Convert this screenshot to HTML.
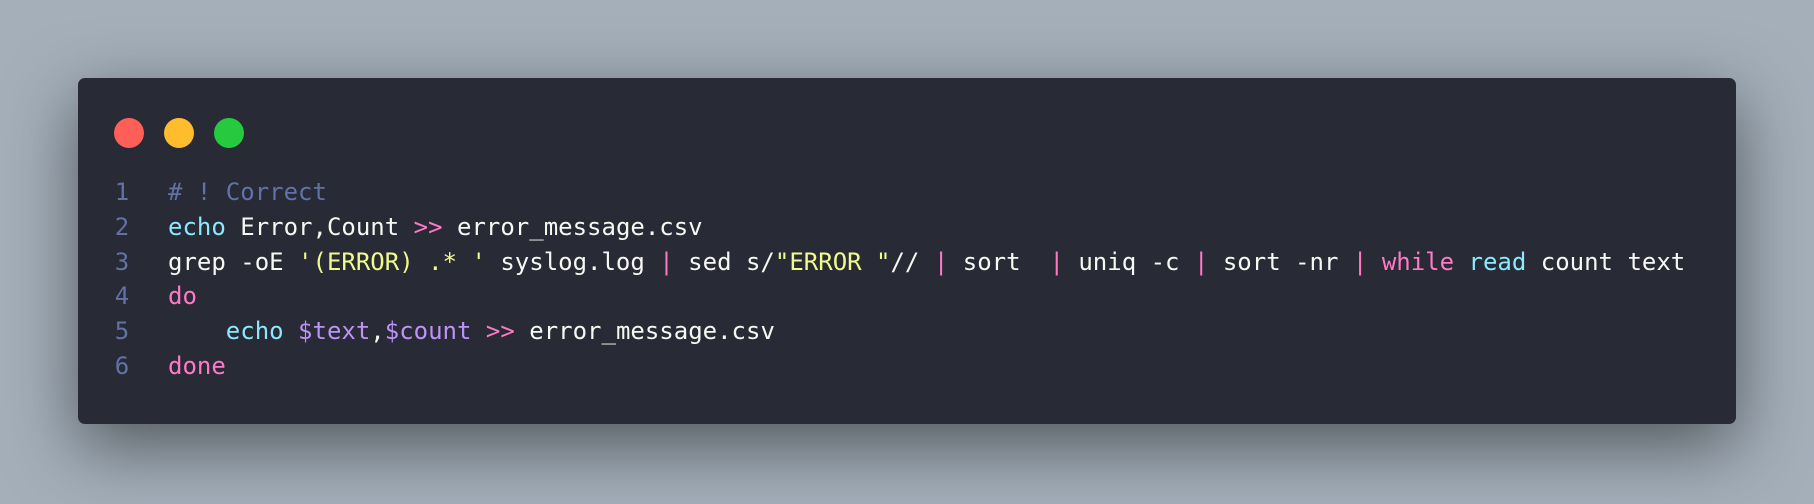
<!DOCTYPE html>
<html><head><meta charset="utf-8"><style>
html,body{margin:0;padding:0}
body{width:1814px;height:504px;background:#a4afba;position:relative;overflow:hidden}
.win{position:absolute;left:78px;top:78px;width:1658px;height:346px;background:#282a36;border-radius:7px;box-shadow:0 22px 70px rgba(0,0,0,0.5)}
.dot{position:absolute;top:40px;width:30px;height:30px;border-radius:50%}
.code{position:absolute;left:0;top:97px;width:1658px;font-family:"DejaVu Sans Mono","Liberation Mono",monospace;font-size:24px;line-height:34.8px;color:#f8f8f2}
.ln{position:absolute;top:0;left:34px;color:#6272a4;width:20px;text-align:center}
.tx{position:absolute;top:0;left:90px;white-space:pre}
.c{color:#6272a4}.k{color:#8be9fd}.p{color:#ff79c6}.y{color:#f1fa8c}.v{color:#bd93f9}
</style></head><body>
<div class="win">
<div class="dot" style="left:36px;background:#ff5f56"></div>
<div class="dot" style="left:86px;background:#ffbd2e"></div>
<div class="dot" style="left:136px;background:#27c93f"></div>
<div class="code"><div class="ln">1<br>2<br>3<br>4<br>5<br>6</div><div class="tx"><span class="c"># ! Correct</span>
<span class="k">echo</span> Error,Count <span class="p">&gt;&gt;</span> error_message.csv
grep -oE <span class="y">'(ERROR) .* '</span> syslog.log <span class="p">|</span> sed s/<span class="y">"ERROR "</span>// <span class="p">|</span> sort  <span class="p">|</span> uniq -c <span class="p">|</span> sort -nr <span class="p">|</span> <span class="p">while</span> <span class="k">read</span> count text
<span class="p">do</span>
    <span class="k">echo</span> <span class="v">$text</span>,<span class="v">$count</span> <span class="p">&gt;&gt;</span> error_message.csv
<span class="p">done</span></div></div>
</div>
</body></html>
